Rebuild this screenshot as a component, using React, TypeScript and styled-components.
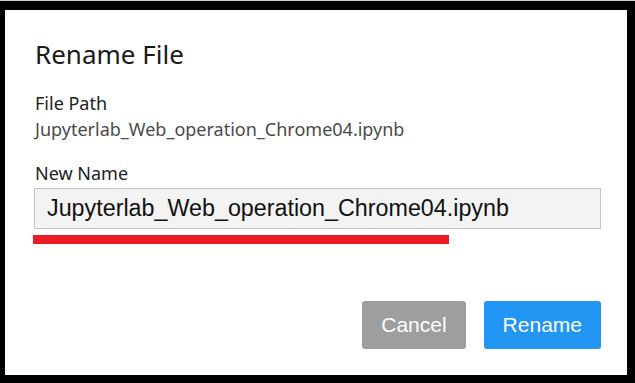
import React, { useState } from 'react';
import styled, { createGlobalStyle } from 'styled-components';

const GlobalStyle = createGlobalStyle`
    html, body {
        margin: 0;
        padding: 0;
        background: #000;
    }
    * {
        box-sizing: border-box;
    }
`;

const Frame = styled.div`
    width: 635px;
    height: 383px;
    background: #000;
    border-top: 1px solid #cfcfcf;
    padding: 9px 8px 8px 5px;
`;

const Dialog = styled.div`
    height: 100%;
    background: #fff;
    padding: 27px 26px 26px 30px;
    display: flex;
    flex-direction: column;
    font-family: 'Noto Sans', 'Open Sans', sans-serif;
    color: #1a1a1a;
`;

const Title = styled.h2`
    margin: 0 0 19px;
    font-size: 26px;
    font-weight: 400;
    line-height: 34px;
`;

const Label = styled.div`
    font-size: 18px;
    line-height: 26px;
    color: #222;
`;

const PathText = styled.div`
    font-size: 18px;
    line-height: 26px;
    color: #4a4a4a;
    margin-bottom: 18px;
`;

const NameInput = styled.input`
    width: calc(100% + 1px);
    height: 41px;
    margin: 2px 0 0 -1px;
    padding: 0 12px;
    background: #f3f3f3;
    border: 1px solid #c4c4c4;
    font-family: 'Liberation Sans', Arial, sans-serif;
    font-size: 23.3px;
    color: #111;
    outline: none;
`;

const Underline = styled.div`
    width: 416px;
    height: 9px;
    margin: 6px 0 0 -2px;
    background: #ed1c24;
`;

const Footer = styled.div`
    margin-top: auto;
    display: flex;
    justify-content: flex-end;
    gap: 18px;
`;

const Button = styled.button<{ primary?: boolean }>`
    height: 48px;
    padding: 0 19px;
    border: none;
    border-radius: 3px;
    background: ${({ primary }) => (primary ? '#2196f3' : '#9e9e9e')};
    color: #fff;
    font-family: 'Liberation Sans', Arial, sans-serif;
    font-size: 21px;
    cursor: pointer;
`;

function App() {
    const [name, setName] = useState<string>('Jupyterlab_Web_operation_Chrome04.ipynb');
    return (
        <>
            <GlobalStyle />
            <Frame>
                <Dialog>
                    <Title>Rename File</Title>
                    <Label>File Path</Label>
                    <PathText>Jupyterlab_Web_operation_Chrome04.ipynb</PathText>
                    <Label>New Name</Label>
                    <NameInput value={name} onChange={(e) => setName(e.target.value)} />
                    <Underline />
                    <Footer>
                        <Button>Cancel</Button>
                        <Button primary>Rename</Button>
                    </Footer>
                </Dialog>
            </Frame>
        </>
    );
}

export default App;
